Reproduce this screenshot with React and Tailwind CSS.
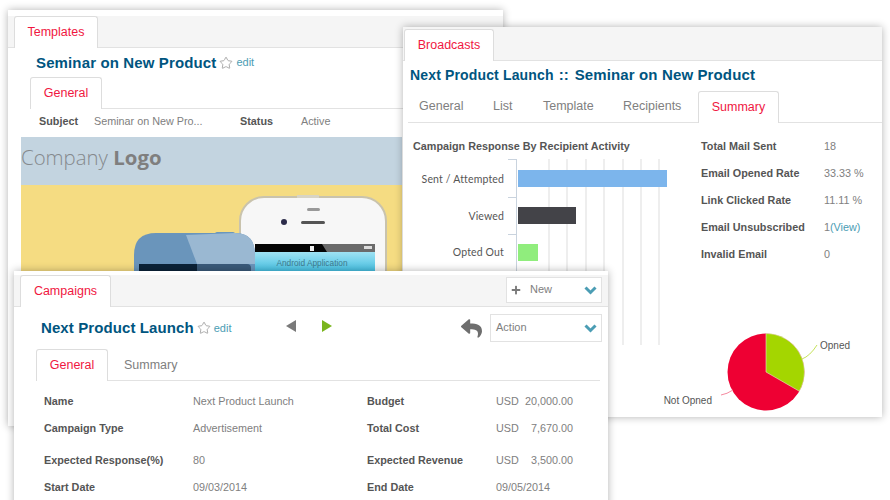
import React from 'react'
import { Star } from 'lucide-react'
import { FaPlus, FaReply } from 'react-icons/fa'

const titleCls = "font-bold text-[15px] leading-[20px] text-[#00557f]"
const labelCls = "font-bold text-[10.8px] leading-[14px] text-[#555555]"
const valueCls = "text-[10.8px] leading-[14px] text-[#808080]"

function TabHead({ children, className }) {
  return (
    <div className={"bg-white border border-b-0 border-[#dddddd] rounded-t-[3px] text-[#f0173f] text-[12.5px] flex items-center justify-center -mb-px " + className}>
      {children}
    </div>
  )
}

function Edit() {
  return (
    <>
      <Star className="text-[#a0a0a0] w-[14px] h-[14px] ml-[3px] mr-[3px]" strokeWidth={1.5} />
      <span className="text-[11px] text-[#4b9db4]">edit</span>
    </>
  )
}

function Chevron() {
  return (
    <svg width="13" height="9" viewBox="0 0 13 9" className="shrink-0">
      <path d="M1.5 1.5 L6.5 6.5 L11.5 1.5" fill="none" stroke="#4b9db4" strokeWidth="3" />
    </svg>
  )
}

function PhonePicture() {
  return (
    <svg width="381" height="241" viewBox="0 0 381 241" className="block">
      <defs>
        <linearGradient id="cyan" gradientUnits="userSpaceOnUse" x1="0" y1="67" x2="0" y2="90">
          <stop offset="0" stopColor="#9fe2f3" />
          <stop offset="1" stopColor="#33b9de" />
        </linearGradient>
      </defs>
      <rect x="219" y="12" width="146" height="200" rx="24" fill="#f7f7f7" stroke="#c9c3ad" strokeWidth="2" />
      <rect x="276" y="10" width="22" height="3" fill="#d8d4c4" />
      <circle cx="263" cy="37" r="3" fill="#2c2c4a" />
      <rect x="286" y="23" width="13" height="3" rx="1.5" fill="#999999" />
      <rect x="280" y="36" width="24" height="3" rx="1.5" fill="#555555" />
      <rect x="234" y="59" width="120" height="8" fill="#6b6b6b" />
      <polygon points="234,59 301,59 306,67 234,67" fill="#050505" />
      <rect x="289" y="61" width="4" height="5" fill="#eeeeee" />
      <rect x="343" y="61" width="8" height="3" fill="#dddddd" />
      <rect x="234" y="67" width="120" height="140" fill="url(#cyan)" />
      <text x="291" y="81" textAnchor="middle" fontSize="8.3" fill="#3f7a8d" fontFamily="Liberation Sans, sans-serif">Android Application</text>
      <rect x="194" y="47" width="20" height="5" rx="2" fill="#6a97bd" />
      <path d="M113 70 Q113 48 135 48 L214 48 Q234 48 234 70 L234 241 L113 241 Z" fill="#6a95bb" />
      <path d="M165 50 L214 48 Q234 48 234 70 L234 79 L176 79 Z" fill="#9ab8d2" />
      <rect x="118" y="79" width="112" height="162" rx="4" fill="#3a5a7a" />
      <rect x="118" y="79" width="58" height="162" fill="#0b2238" />
    </svg>
  )
}

function Templates() {
  return (
    <div className="absolute left-[8px] top-[10px] w-[495px] h-[416px] bg-white shadow-[0_0_8px_rgba(0,0,0,0.3)] pt-[6px] overflow-hidden">
      <div className="h-[32px] bg-[#f5f5f5] border-b border-[#e2e2e2] pl-[6px] flex items-end">
        <TabHead className="w-[84px] h-[32px]">Templates</TabHead>
      </div>
      <div className="pl-[28px] h-[29px] flex items-center">
        <span className={titleCls + " tracking-[0.13px]"}>Seminar on New Product</span>
        <Edit />
      </div>
      <div className="ml-[22px] h-[32px] border-b border-[#e2e2e2] flex items-end">
        <TabHead className="w-[72px] h-[32px]">General</TabHead>
      </div>
      <div className="flex items-center h-[24px] mb-[4px] pl-[31px]">
        <span className={labelCls + " w-[55px]"}>Subject</span>
        <span className={valueCls + " w-[146px]"}>Seminar on New Pro...</span>
        <span className={labelCls + " w-[61px]"}>Status</span>
        <span className={valueCls}>Active</span>
      </div>
      <div className="ml-[13px] w-[381px]">
        <div className="h-[48px] pb-[7px] bg-[#c3d4e0] flex items-center font-['Open_Sans',sans-serif] font-light text-[20.4px] text-[#85898d]">
          Company&nbsp;<b className="font-bold text-[#7f7f7f]">Logo</b>
        </div>
        <div className="bg-[#f5dc82]">
          <PhonePicture />
        </div>
      </div>
    </div>
  )
}

function BarChart() {
  const grid = [549, 567, 586, 604, 623, 641, 659]
  const ticks = [159, 197, 234, 271, 308, 345]
  const lbl = { fontSize: 10.5, fill: '#555555', textAnchor: 'end', fontFamily: 'Lato, sans-serif', letterSpacing: 0.15 }
  return (
    <svg width="270" height="200" viewBox="410 155 270 200" className="block mt-[2px] -ml-[3px]">
      {grid.map((x) => <line key={x} x1={x} y1="159" x2={x} y2="345" stroke="#dddddd" />)}
      <line x1="516.5" y1="159" x2="516.5" y2="345" stroke="#c9d3de" />
      {ticks.map((y) => <line key={y} x1="508" y1={y + 0.5} x2="516" y2={y + 0.5} stroke="#c9d3de" />)}
      <rect x="518" y="170" width="149" height="17" fill="#7cb5ec" />
      <rect x="518" y="207" width="58" height="17" fill="#434348" />
      <rect x="518" y="244" width="20" height="17" fill="#90ed7d" />
      <text x="504" y="183" {...lbl}>Sent / Attempted</text>
      <text x="504" y="220" {...lbl}>Viewed</text>
      <text x="504" y="256" {...lbl}>Opted Out</text>
    </svg>
  )
}

function PieChart() {
  return (
    <svg width="200" height="90" viewBox="0 0 200 90" className="block">
      <circle cx="106" cy="45" r="38.5" fill="#ee0033" />
      <path d="M106 45 L106 6.5 A38.5 38.5 0 0 1 139.3 64.2 Z" fill="#a4d600" stroke="#e8e8d0" strokeWidth="0.6" />
      <path d="M142 32 Q150 29 157 18" fill="none" stroke="#c5e25a" />
      <path d="M73 63 Q67 67 61 68" fill="none" stroke="#f58aa0" />
      <text x="160" y="22" fontSize="10" fill="#555555" fontFamily="Liberation Sans, sans-serif">Opned</text>
      <text x="52" y="77" textAnchor="end" fontSize="10" fill="#555555" fontFamily="Liberation Sans, sans-serif">Not Opned</text>
    </svg>
  )
}

function Broadcasts() {
  const stats = [
    ['Total Mail Sent', '18'],
    ['Email Opened Rate', '33.33 %'],
    ['Link Clicked Rate', '11.11 %'],
    ['Email Unsubscribed', '1'],
    ['Invalid Email', '0'],
  ]
  return (
    <div className="absolute left-[403px] top-[27px] w-[479px] h-[390px] bg-white shadow-[0_0_8px_rgba(0,0,0,0.3)] overflow-hidden">
      <div className="h-[34px] bg-[#f5f5f5] border-b border-[#e2e2e2] pl-[1px] flex items-end">
        <TabHead className="w-[90px] h-[32px]">Broadcasts</TabHead>
      </div>
      <div className={"h-[28px] pl-[7px] flex items-center " + titleCls}>
        <span className="text-[14px] tracking-[0.15px]">Next Product Launch</span>
        <span className="ml-[5px] mr-[6px]">::</span>
        <span className="tracking-[0.13px]">Seminar on New Product</span>
      </div>
      <div className="ml-[5px] h-[32px] mt-[2px] border-b border-[#e2e2e2] flex items-end text-[12.5px] text-[#808080]">
        <span className="ml-[11px] w-[74px] h-[31px] leading-[31px]">General</span>
        <span className="w-[50px] h-[31px] leading-[31px]">List</span>
        <span className="w-[80px] h-[31px] leading-[31px]">Template</span>
        <span className="w-[75px] h-[31px] leading-[31px]">Recipients</span>
        <TabHead className="w-[81px] h-[32px]">Summary</TabHead>
      </div>
      <div className="flex pl-[7px]">
        <div className="w-[291px] pl-[3px]">
          <div className={labelCls + " mt-[16px] h-[14px] text-[10.3px]"}>Campaign Response By Recipient Activity</div>
          <BarChart />
        </div>
        <div className="pt-[16px] flex flex-col gap-[13px]">
          {stats.map(([k, v]) => (
            <div key={k} className="flex h-[14px]">
              <span className={labelCls + " w-[123px]"}>{k}</span>
              <span className={valueCls}>
                {v}{k === 'Email Unsubscribed' && <span className="text-[#4b9db4]">(View)</span>}
              </span>
            </div>
          ))}
        </div>
      </div>
      <div className="absolute left-[257px] top-[300px]">
        <PieChart />
      </div>
    </div>
  )
}

function Field({ label, value }) {
  return (
    <div className="flex items-center h-[14px]">
      <span className={labelCls + " w-[149px]"}>{label}</span>
      <span className={valueCls + " w-[174px]"}>{value}</span>
    </div>
  )
}

function Money({ label, cur, amount }) {
  return (
    <div className="flex items-center h-[14px]">
      <span className={labelCls + " w-[129px]"}>{label}</span>
      {cur ? (
        <span className={valueCls + " flex w-[77px] justify-between"}>
          <span>USD</span>
          <span>{amount}</span>
        </span>
      ) : (
        <span className={valueCls}>{amount}</span>
      )}
    </div>
  )
}

function Campaigns() {
  const rows = [
    ['Name', 'Next Product Launch', 'Budget', 'USD', '20,000.00', 'mt-[13px]'],
    ['Campaign Type', 'Advertisement', 'Total Cost', 'USD', '7,670.00', 'mt-[13px]'],
    ['Expected Response(%)', '80', 'Expected Revenue', 'USD', '3,500.00', 'mt-[18px]'],
    ['Start Date', '09/03/2014', 'End Date', '', '09/05/2014', 'mt-[13px]'],
  ]
  return (
    <div className="absolute left-[14px] top-[271px] w-[594px] h-[260px] bg-white shadow-[0_0_8px_rgba(0,0,0,0.3)] pt-[4px] overflow-hidden">
      <div className="h-[32px] bg-[#f5f5f5] border-b border-[#e2e2e2] pl-[6px] flex items-end relative">
        <TabHead className="w-[91px] h-[32px]">Campaigns</TabHead>
        <div className="absolute right-[6px] top-[2px] w-[96px] h-[26px] bg-white border border-[#e2e2e2] flex items-center pl-[4px] pr-[4px] text-[11px] text-[#808080]">
          <FaPlus className="text-[#7a7a7a] text-[10px]" />
          <span className="ml-[9px] flex-1 pb-[2px]">New</span>
          <Chevron />
        </div>
      </div>
      <div className="h-[42px] flex items-center pl-[27px] pr-[6px]">
        <span className={titleCls + " tracking-[0.1px]"}>Next Product Launch</span>
        <Edit />
        <svg width="12" height="12" viewBox="0 0 12 12" className="ml-[53px] -mt-[4px]"><polygon points="11,0 11,12 1,6" fill="#7a7a7a" /></svg>
        <svg width="12" height="12" viewBox="0 0 12 12" className="ml-[24px] -mt-[4px]"><polygon points="1,0 1,12 11,6" fill="#7ab51d" /></svg>
        <FaReply className="ml-auto mr-[8px] text-[#6e6e6e] text-[21px]" />
        <div className="w-[112px] h-[28px] bg-white border border-[#e2e2e2] flex items-center pl-[5px] pr-[4px] text-[11px] text-[#808080]">
          <span className="flex-1 pb-[2px]">Action</span>
          <Chevron />
        </div>
      </div>
      <div className="ml-[22px] mr-[8px] h-[32px] border-b border-[#e2e2e2] flex items-end text-[12.5px] text-[#808080]">
        <TabHead className="w-[72px] h-[32px]">General</TabHead>
        <span className="ml-[16px] h-[30px] leading-[30px]">Summary</span>
      </div>
      <div className="pl-[30px]">
        {rows.map(([a, b, c, d, e, m]) => (
          <div key={a} className={"flex " + m}>
            <Field label={a} value={b} />
            <Money label={c} cur={d} amount={e} />
          </div>
        ))}
      </div>
    </div>
  )
}

function App() {
  return (
    <div className="relative w-[890px] h-[500px] overflow-hidden bg-white font-['Liberation_Sans',sans-serif]">
      <Templates />
      <Broadcasts />
      <Campaigns />
    </div>
  )
}

export default App
